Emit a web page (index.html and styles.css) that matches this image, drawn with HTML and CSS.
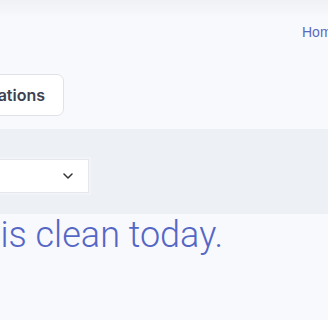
FILE: index.html
```html
<!DOCTYPE html>
<html lang="en">
<head>
<meta charset="utf-8">
<title>Dashboard</title>
<link rel="stylesheet" href="styles.css">
</head>
<body>
<header class="topbar">
  <nav class="nav">
    <a class="nav-link" href="#">Home</a>
    <a class="nav-link" href="#">Settings</a>
  </nav>
</header>
<section class="toolbar">
  <div class="toolbar-edge">
    <button class="btn" type="button">Notifications</button>
  </div>
</section>
<section class="filters">
  <div class="filters-edge">
    <div class="select">
      <span class="select-value">All channels</span>
      <svg class="chev" width="10" height="6" viewBox="0 0 10 6" aria-hidden="true"><path d="M1 1l4 4 4-4" fill="none" stroke="#333" stroke-width="1.5" stroke-linecap="round" stroke-linejoin="round"/></svg>
    </div>
  </div>
</section>
<div class="headline-edge">
  <h1 class="headline">Everything is clean today.</h1>
</div>
</body>
</html>
```

FILE: styles.css
```css
html, body {
  margin: 0;
  padding: 0;
}
body {
  width: 328px;
  height: 320px;
  overflow: hidden;
  background: #f8f9fd;
  font-family: "Liberation Sans", Arial, sans-serif;
}
.topbar {
  height: 64px;
  display: flex;
  align-items: center;
  background: linear-gradient(to bottom, #f0f1f5 0, #f8f9fd 18px);
}
.nav {
  display: flex;
  gap: 24px;
  padding-left: 302px;
  white-space: nowrap;
}
.nav-link {
  color: #5b69bd;
  font-size: 14px;
  line-height: 20px;
  text-decoration: none;
}
.toolbar {
  height: 65px;
  display: flex;
  align-items: flex-start;
  padding-top: 10px;
  box-sizing: border-box;
}
.toolbar-edge {
  width: 64px;
  display: flex;
  justify-content: flex-end;
}
.btn {
  flex: none;
  height: 42px;
  padding: 0 18px;
  background: #fff;
  border: 1px solid #dfe2e8;
  border-radius: 7px;
  font-family: "Inter", sans-serif;
  font-weight: 600;
  font-size: 16px;
  color: #3c4250;
  white-space: nowrap;
}
.filters {
  height: 85px;
  background: #edf0f5;
  padding-top: 30px;
  box-sizing: border-box;
}
.filters-edge {
  width: 89px;
  display: flex;
  justify-content: flex-end;
}
.select {
  flex: none;
  width: 200px;
  height: 34px;
  box-sizing: border-box;
  background: #fff;
  border: 1px solid #e4e7ed;
  box-shadow: 0 0 0 2px #f1f3f7;
  display: flex;
  align-items: center;
  justify-content: space-between;
  padding: 0 15px 0 12px;
  font-size: 14px;
  color: #fff;
}
.select-value {
  visibility: hidden;
}
.chev {
  display: block;
}
.headline-edge {
  width: 223px;
  display: flex;
  justify-content: flex-end;
}
.headline {
  flex: none;
  margin: 0;
  font-family: "Roboto", sans-serif;
  font-weight: 300;
  font-size: 36px;
  line-height: 43px;
  color: #5567c5;
  white-space: nowrap;
}
```
